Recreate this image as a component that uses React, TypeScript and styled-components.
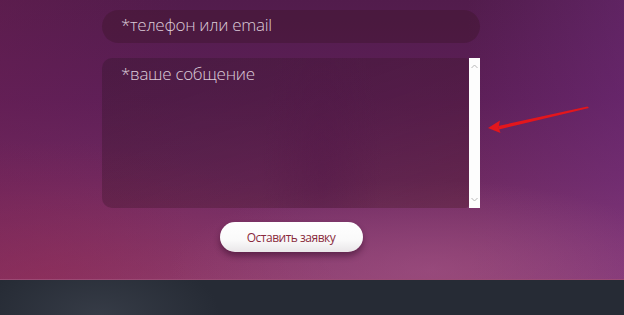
import * as React from "react"
import styled, { createGlobalStyle } from "styled-components"

const GlobalStyle = createGlobalStyle`
  html, body {
    margin: 0;
    padding: 0;
    background: #262b35;
    overflow: hidden;
  }
  body {
    font-family: "Open Sans", "Noto Sans", sans-serif;
  }
`

const Section = styled.section`
  position: relative;
  height: 279px;
  border-bottom: 1px solid #9a4a74;
  background:
    radial-gradient(ellipse 260px 90px at 430px 270px, rgba(170, 90, 140, 0.45), transparent),
    radial-gradient(ellipse 300px 140px at 40px 280px, rgba(150, 40, 80, 0.45), transparent),
    linear-gradient(90deg, rgba(110, 30, 80, 0.35) 0%, rgba(0, 0, 0, 0) 30%, rgba(0, 0, 0, 0) 75%, rgba(120, 50, 140, 0.35) 100%),
    linear-gradient(180deg, #521c4c 0%, #5d1f58 35%, #6e2a62 65%, #8a3d6e 100%);
`

const Form = styled.form`
  width: 378px;
  margin: 0 0 0 102px;
  padding-top: 10px;
  display: flex;
  flex-direction: column;
`

const fieldText = `
  font-family: "Open Sans", "Noto Sans", sans-serif;
  font-size: 17px;
  font-weight: 300;
  letter-spacing: -0.3px;
  color: #dccbd9;
  outline: none;
  border: none;
`

const Input = styled.input`
  ${fieldText}
  box-sizing: border-box;
  height: 33px;
  width: 100%;
  padding: 0 19px 4px;
  border-radius: 17px;
  background: rgba(62, 22, 44, 0.42);
  &::placeholder {
    color: #dccbd9;
  }
`

const AreaWrap = styled.div`
  display: flex;
  margin-top: 15px;
  height: 150px;
`

const Area = styled.textarea`
  ${fieldText}
  flex: 1;
  resize: none;
  box-sizing: border-box;
  padding: 4px 19px;
  border-radius: 10px 4px 4px 10px;
  background:
    radial-gradient(ellipse 60px 160px at 220px 110px, rgba(80, 20, 70, 0.3), transparent),
    linear-gradient(160deg, rgba(58, 24, 50, 0.45), rgba(70, 24, 48, 0.38) 60%, rgba(85, 32, 52, 0.45));
  &::placeholder {
    color: #dccbd9;
  }
`

const ScrollTrack = styled.div`
  width: 11px;
  background: #fdfdfd;
  display: flex;
  flex-direction: column;
  justify-content: space-between;
  align-items: center;
  padding: 6px 0;
  box-sizing: border-box;
`

const ButtonRow = styled.div`
  display: flex;
  justify-content: center;
  margin-top: 14px;
`

const Button = styled.button`
  width: 143px;
  height: 30px;
  border: none;
  border-radius: 15px;
  background: linear-gradient(180deg, #ffffff 0%, #fafafa 60%, #e9e6e8 100%);
  box-shadow: 0 4px 6px rgba(40, 5, 30, 0.45);
  color: #8a2a3c;
  font-family: "Open Sans", "Noto Sans", sans-serif;
  font-size: 12px;
  letter-spacing: -0.5px;
  cursor: pointer;
`

const Arrow = styled.svg`
  position: absolute;
  left: 484px;
  top: 102px;
`

const Footer = styled.footer`
  height: 40px;
  background:
    radial-gradient(ellipse 120px 60px at 100px 35px, rgba(70, 76, 88, 0.5), transparent),
    #262b35;
`

const Chevron = ({ up }: { up?: boolean }) => (
  <svg width="7" height="5" viewBox="0 0 7 5">
    <path
      d={up ? "M0.5 4 L3.5 1 L6.5 4" : "M0.5 1 L3.5 4 L6.5 1"}
      fill="none"
      stroke="#b8b8b8"
      strokeWidth="1"
    />
  </svg>
)

export default function App() {
  return (
    <>
      <GlobalStyle />
      <Section>
        <Form onSubmit={(e) => e.preventDefault()}>
          <Input type="text" placeholder="*телефон или email" />
          <AreaWrap>
            <Area placeholder="*ваше собщение" />
            <ScrollTrack>
              <Chevron up />
              <Chevron />
            </ScrollTrack>
          </AreaWrap>
          <ButtonRow>
            <Button type="submit">Оставить заявку</Button>
          </ButtonRow>
        </Form>
        <Arrow width="110" height="34" viewBox="0 0 110 34">
          <path d="M103.5 4.5 L105 6 L15 27.5 L14 24 Z" fill="#e3161c" />
          <path d="M4 26 L16 18.5 L14.5 25.5 L16.5 31 Z" fill="#e3161c" />
        </Arrow>
      </Section>
      <Footer />
    </>
  )
}
